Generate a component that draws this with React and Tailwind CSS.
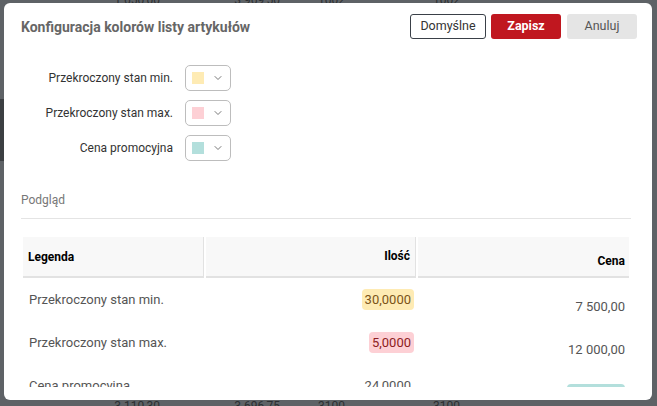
import { ChevronDown } from 'lucide-react';

const colorRows = [
  { label: 'Przekroczony stan min.', color: 'bg-[#feebb4]' },
  { label: 'Przekroczony stan max.', color: 'bg-[#fdd0d5]' },
  { label: 'Cena promocyjna', color: 'bg-[#b3dfdc]' },
];

const previewRows = [
  { label: 'Przekroczony stan min.', qty: '30,0000', qtyCls: 'bg-[#feebb4] text-[#7b5418]', price: '7 500,00', priceCls: '' },
  { label: 'Przekroczony stan max.', qty: '5,0000', qtyCls: 'bg-[#fdd0d5] text-[#8e1c22]', price: '12 000,00', priceCls: '' },
  { label: 'Cena promocyjna', qty: '24,0000', qtyCls: 'text-[#555]', price: '', priceCls: 'bg-[#b3dfdc] w-[58px] h-[18px]' },
];

function ColorPicker({ color }) {
  return (
    <button className="flex items-center h-[26px] w-[46px] rounded-[5px] border border-[#bdbdbd] bg-white pl-[6px] gap-[8px]">
      <span className={`block w-[12px] h-[12px] ${color}`} />
      <ChevronDown size={12} strokeWidth={1.6} className="text-[#555]" />
    </button>
  );
}

export default function App() {
  return (
    <div className="relative w-[657px] h-[406px] overflow-hidden bg-[#5e6266] font-['Roboto',sans-serif]">
      {/* page behind the backdrop */}
      <div className="absolute left-0 top-[-9px] w-full flex text-[12px] text-[#2c2f31]">
        <span className="w-[160px] text-right">1 650,00</span>
        <span className="w-[120px] text-right">3 969,50</span>
        <span className="w-[65px] text-right">1002</span>
        <span className="w-[115px] text-right">1002</span>
      </div>
      <div className="absolute left-0 top-[99px] w-[4px] h-[62px] bg-[#3c3f42]" />
      <div className="absolute left-0 bottom-[-9px] w-full flex text-[12px] text-[#2c2f31]">
        <span className="w-[160px] text-right">3 110,30</span>
        <span className="w-[120px] text-right">3 696,75</span>
        <span className="w-[65px] text-right">3100</span>
        <span className="w-[115px] text-right">3100</span>
      </div>

      <div className="pt-[3px] pl-[4px]">
        <div className="relative w-[648px] h-[397px] bg-white rounded-[6px] flex flex-col">
          {/* header */}
          <div className="flex items-center justify-between pl-[17px] pr-[15px] pt-[11px] h-[47px]">
            <h2 className="text-[14px] font-bold text-[#666] pb-[9px]">Konfiguracja kolorów listy artykułów</h2>
            <div className="flex items-center gap-[5px] self-start">
              <button className="h-[25px] w-[76px] rounded-[3px] border border-[#3a4048] text-[12.5px] text-[#333]">Domyślne</button>
              <button className="h-[25px] w-[70px] rounded-[3px] bg-[#c0171f] text-[12.5px] font-bold text-white">Zapisz</button>
              <button className="h-[25px] w-[70px] rounded-[3px] bg-[#e5e5e5] text-[12.5px] text-[#555] ml-[1px]">Anuluj</button>
            </div>
          </div>

          {/* color config */}
          <div className="flex flex-col gap-[9px] pt-[15px] pl-[17px]">
            {colorRows.map((r) => (
              <div key={r.label} className="flex items-center gap-[12px] h-[26px]">
                <span className="w-[152px] text-right text-[12px] text-[#333]">{r.label}</span>
                <ColorPicker color={r.color} />
              </div>
            ))}
          </div>

          {/* preview */}
          <div className="ml-[17px] mr-[21px] mt-[30px] pb-[9px] border-b border-[#e4e4e4] text-[12px] text-[#777]">Podgląd</div>

          <div className="ml-[19px] mr-[23px] mt-[18px] h-[150px] overflow-hidden">
            <div className="flex h-[41px] text-[12px] font-bold text-black">
              <div className="w-[181px] mr-[2px] bg-[#f8f8f8] border-b-2 border-r border-[#e2e2e2] flex items-center pl-[5px]">Legenda</div>
              <div className="w-[210px] mr-[2px] bg-[#f8f8f8] border-b-2 border-r border-[#e2e2e2] flex items-center justify-end pr-[5px] pb-[2px]">Ilość</div>
              <div className="flex-1 bg-[#f8f8f8] border-b-2 border-[#e2e2e2] flex items-end justify-end pr-[4px] pb-[6px]">Cena</div>
            </div>

            {previewRows.map((row) => (
              <div key={row.label} className="flex h-[43px] text-[13px] text-[#555]">
                <div className="w-[183px] flex items-center pl-[6px]">{row.label}</div>
                <div className="w-[212px] flex items-center justify-end pr-[4px]">
                  <span className={`rounded-[4px] px-[3px] py-[1px] ${row.qtyCls}`}>{row.qty}</span>
                </div>
                <div className="flex-1 flex items-center justify-end pr-[4px] pt-[14px]">
                  <span className={`rounded-[4px] ${row.priceCls}`}>{row.price}</span>
                </div>
              </div>
            ))}
          </div>
        </div>
      </div>
    </div>
  );
}
